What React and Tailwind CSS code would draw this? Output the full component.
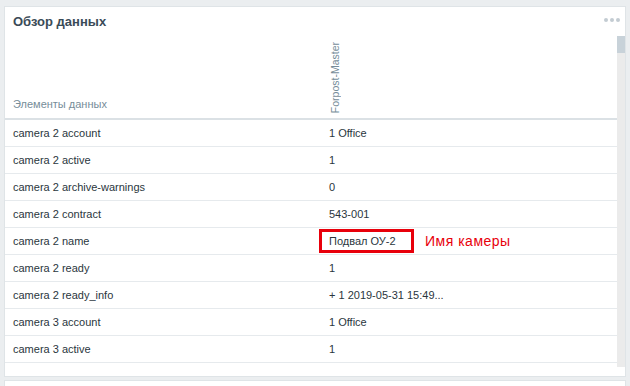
import React from 'react';

const rows = [
  ['camera 2 account', '1 Office'],
  ['camera 2 active', '1'],
  ['camera 2 archive-warnings', '0'],
  ['camera 2 contract', '543-001'],
  ['camera 2 name', 'Подвал ОУ-2'],
  ['camera 2 ready', '1'],
  ['camera 2 ready_info', '+ 1 2019-05-31 15:49...'],
  ['camera 3 account', '1 Office'],
  ['camera 3 active', '1'],
];

export default function App() {
  return (
    <div className="relative w-[630px] h-[386px] overflow-hidden bg-[#ebeef0] px-[4px] pt-[6px] font-['Liberation_Sans',Arial,sans-serif]">
      <div className="h-[371px] border border-[#dfe4e7] bg-white flex flex-col">
        <div className="h-[29px] shrink-0 flex items-center justify-between pl-[8px] pr-[5px]">
          <span className="text-[13px] font-bold text-[#3a4b57]">Обзор данных</span>
          <span className="flex gap-[2px] pb-[4px]">
            <span className="w-[4px] h-[4px] rounded-full bg-[#c3ccd2]" />
            <span className="w-[4px] h-[4px] rounded-full bg-[#c3ccd2]" />
            <span className="w-[4px] h-[4px] rounded-full bg-[#c3ccd2]" />
          </span>
        </div>

        <div className="h-[331px] shrink-0 flex">
          <div className="flex-1 overflow-hidden">
            <div className="h-[84px] flex items-end border-b-2 border-[#dbe1e5] text-[11px] text-[#768d99]">
              <div className="w-[316px] pl-[8px] pb-[6px]">Элементы данных</div>
              <div className="pl-[8px] pb-[5px]">
                <span className="block [writing-mode:vertical-rl] rotate-180 text-[10.5px] leading-[12px]">Forpost-Master</span>
              </div>
            </div>
            {rows.map(([name, value]) => (
              <div key={name} className="h-[27px] flex items-center border-b border-[#e6eaed] text-[11px] text-[#2a363d]">
                <div className="w-[316px] pl-[8px]">{name}</div>
                <div className="pl-[8px]">{value}</div>
              </div>
            ))}
          </div>
          <div className="w-[8px] bg-[#ebebeb]">
            <div className="h-[17px] bg-[#c8d2d9]" />
          </div>
        </div>
      </div>
      <div className="mt-[3px] h-[20px] border border-[#dfe4e7] bg-white" />

      <div className="absolute left-[319px] top-[229px] w-[95px] h-[24px] border-[3px] border-[#e8000b]" />
      <span className="absolute left-[425px] top-[233px] text-[14px] leading-[16px] tracking-[0.5px] text-[#e8000b]">Имя камеры</span>
    </div>
  );
}
